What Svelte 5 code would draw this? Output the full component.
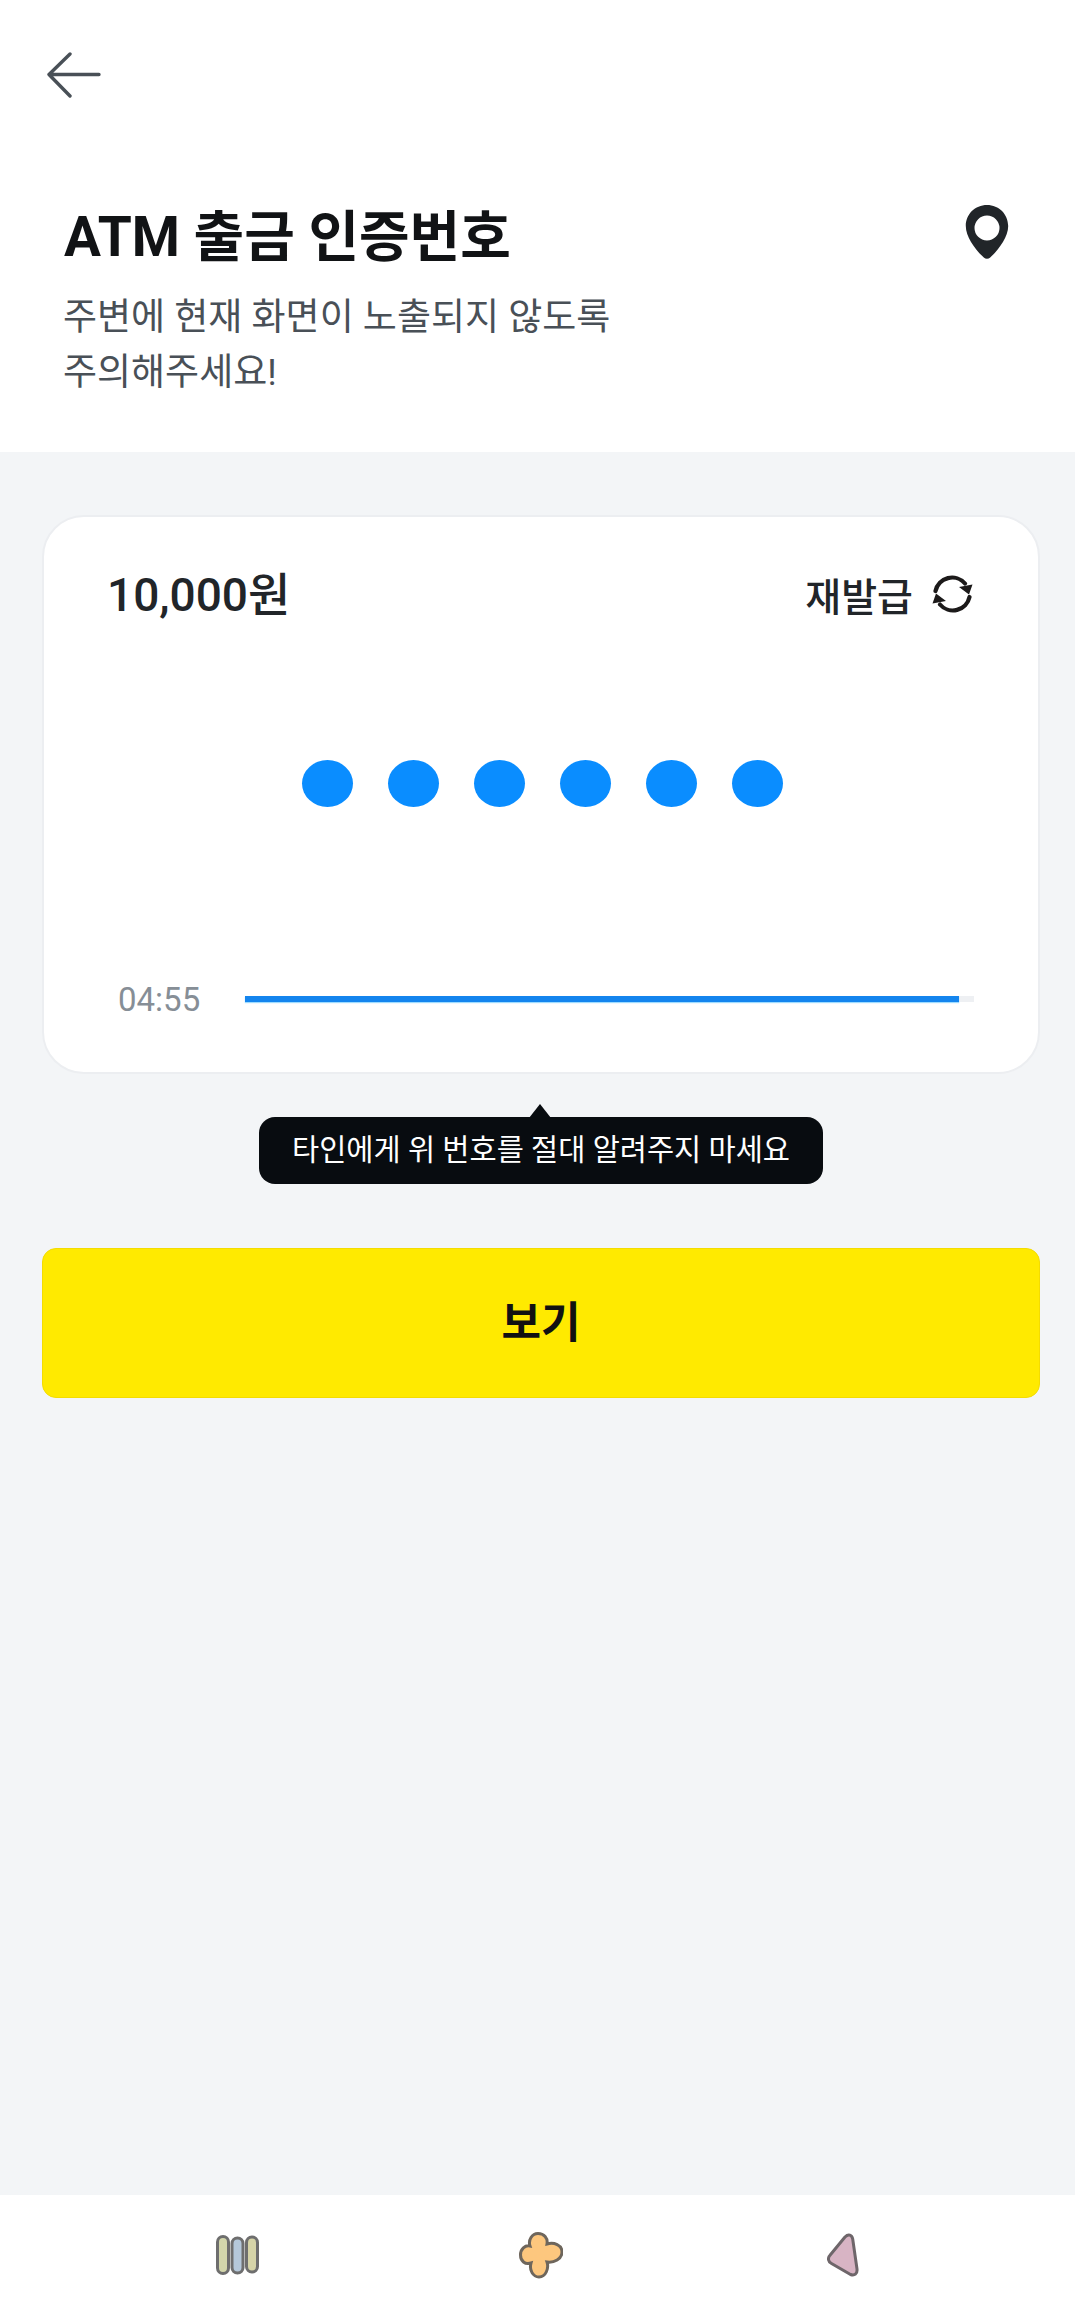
<script>
  const dots = [0, 1, 2, 3, 4, 5];
</script>

<div class="page">
  <header class="head">
    <button class="back" aria-label="뒤로">
      <svg width="54" height="46" viewBox="0 0 54 46" fill="none" stroke="#495057" stroke-width="3.4" stroke-linecap="round" stroke-linejoin="round">
        <path d="M52 22.5H2M23 2 2 22.5 23 44" />
      </svg>
    </button>
    <div class="title-row">
      <div>
        <h1>ATM 출금 인증번호</h1>
        <p>주변에 현재 화면이 노출되지 않도록<br />주의해주세요!</p>
      </div>
      <svg class="pin" width="44" height="54" viewBox="0 0 44 54">
        <path fill="#212529" fill-rule="evenodd" d="M22 0C10 0 .8 9.300 .8 21c0 11 9.700 24 18 31.500 1.800 1.700 4.600 1.700 6.400 0C33.500 45 43.200 32 43.200 21 43.200 9.300 34 0 22 0Zm0 10.500a12.500 12.500 0 1 1 0 25 12.500 12.500 0 0 1 0-25Z" />
      </svg>
    </div>
  </header>

  <main class="body">
    <section class="card">
      <div class="top">
        <strong class="amount">10,000원</strong>
        <div class="reissue">
          <span>재발급</span>
          <svg width="42" height="38" viewBox="0 0 42 38" fill="none">
            <path d="M3.500 16A17 17 0 0 1 33 8.500M37.500 22A17 17 0 0 1 8 29.500" stroke="#1c1a1a" stroke-width="4.200" stroke-linecap="round" />
            <path d="M27 12 40.500 9.500l-3.500 10ZM14 26 .5 28.500l3.500-10Z" fill="#1c1a1a" />
          </svg>
        </div>
      </div>
      <div class="dots">
        {#each dots as d (d)}
          <i class="dot"></i>
        {/each}
      </div>
      <div class="timer">
        <span>04:55</span>
        <div class="track"><div class="fill" style="width: 97.900%"></div></div>
      </div>
    </section>

    <div class="tip-wrap">
      <div class="tip">타인에게 위 번호를 절대 알려주지 마세요</div>
    </div>

    <button class="view">보기</button>
  </main>

  <nav class="nav">
    <svg width="44" height="42" viewBox="0 0 44 42" stroke="#6e6e6e" stroke-width="3">
      <rect x="1.500" y="1.500" width="11" height="37" rx="5.500" fill="#d3d6ab" />
      <rect x="16" y="3" width="11" height="35" rx="5.500" fill="#b5c8da" />
      <rect x="30.500" y="2" width="11" height="35" rx="5.500" fill="#d6d4a8" />
    </svg>
    <svg width="44" height="47" viewBox="0 0 44 47">
      <path fill="#fdc77e" stroke="#6e665c" stroke-width="3" d="M19 1.500C25 1.500 29 6 28 12 35 10 43 13 43 20 43 27 35 31 28 30 30 36 27 45 20 45 14 45 10 38 12 31 6 33 1.500 29 1.500 23 1.500 17 6 13 11 14 9 8 13 1.500 19 1.500Z" />
    </svg>
    <svg class="tri" width="32" height="45" viewBox="0 0 32 45">
      <path fill="#d8b4c4" stroke="#6e666a" stroke-width="3" stroke-linejoin="round" d="M18 4c3.500-3.500 7-2 7.700 2l4.300 30c.5 5-2.500 7-6.500 5.500L4.500 30.500C1 28.500.5 25 3 22.300L18 4Z" />
    </svg>
  </nav>
</div>

<style>
  :global(body) {
    margin: 0;
    background: #f3f5f7;
  }
  .page {
    width: 1075px;
    height: 2322px;
    display: flex;
    flex-direction: column;
    background: #f3f5f7;
    font-family: Roboto, "Noto Sans CJK KR", sans-serif;
    overflow: hidden;
  }
  .head {
    height: 452px;
    box-sizing: border-box;
    background: #fff;
    padding: 52px 66px 0 47px;
  }
  .back {
    display: block;
    padding: 0;
    border: 0;
    background: none;
    height: 46px;
  }
  .back svg {
    display: block;
  }
  .title-row {
    display: flex;
    justify-content: space-between;
    align-items: flex-start;
    margin-top: 100px;
    padding-left: 16px;
  }
  .pin {
    margin-top: 7px;
  }
  h1 {
    margin: 0 0 0 1px;
    font-size: 55px;
    line-height: 78px;
    font-weight: 700;
    color: #111315;
  }
  p {
    margin: 14px 0 0;
    font-size: 37px;
    line-height: 55px;
    color: #495057;
  }
  .body {
    flex: 1;
    padding: 63px 35px 0 42px;
  }
  .card {
    height: 559px;
    box-sizing: border-box;
    background: #fff;
    border: 2px solid #eceef1;
    border-radius: 42px;
    padding: 46px 64px 0 66px;
    display: flex;
    flex-direction: column;
  }
  .top {
    display: flex;
    justify-content: space-between;
    align-items: center;
    height: 56px;
    margin: 0 0 0 -3px;
  }
  .amount {
    font-size: 46px;
    font-weight: 500;
    color: #212529;
  }
  .reissue {
    display: flex;
    align-items: center;
    gap: 19px;
    margin-top: 6px;
    font-size: 39px;
    font-weight: 500;
    color: #212529;
  }
  .reissue svg {
    display: block;
  }
  .dots {
    display: flex;
    justify-content: center;
    gap: 35px;
    margin-top: 141px;
  }
  .dot {
    width: 51px;
    height: 47px;
    border-radius: 50%;
    background: #0a8dff;
  }
  .timer {
    display: flex;
    align-items: center;
    margin-top: 173px;
    padding-left: 8px;
    gap: 45px;
  }
  .timer span {
    font-size: 33px;
    line-height: 40px;
    color: #868e96;
  }
  .track {
    flex: 1;
    height: 6px;
    margin-bottom: 3px;
    background: #eef0f3;
  }
  .fill {
    height: 100%;
    background: #1485ee;
    box-shadow: 0 1px 1px #9fdcff;
  }
  .tip-wrap {
    display: flex;
    justify-content: center;
    margin-top: 43px;
  }
  .tip {
    position: relative;
    width: 564px;
    height: 67px;
    border-radius: 16px;
    background: #080c10;
    color: #fff;
    font-size: 29.500px;
    line-height: 67px;
    text-align: center;
    white-space: nowrap;
  }
  .tip::before {
    content: "";
    position: absolute;
    left: 270px;
    top: -13px;
    border-left: 11px solid transparent;
    border-right: 11px solid transparent;
    border-bottom: 14px solid #080c10;
  }
  .view {
    display: block;
    width: 100%;
    height: 150px;
    margin-top: 64px;
    padding: 0 0 8px;
    border: 1px solid #f4dc00;
    border-radius: 14px;
    background: #ffea00;
    color: #111;
    font-family: inherit;
    font-size: 43px;
    font-weight: 700;
  }
  .nav {
    height: 127px;
    background: #fff;
    display: flex;
    justify-content: center;
    align-items: center;
    gap: 259px;
    padding-bottom: 6px;
    box-sizing: border-box;
  }
  .tri {
    margin-left: 5px;
  }
</style>
